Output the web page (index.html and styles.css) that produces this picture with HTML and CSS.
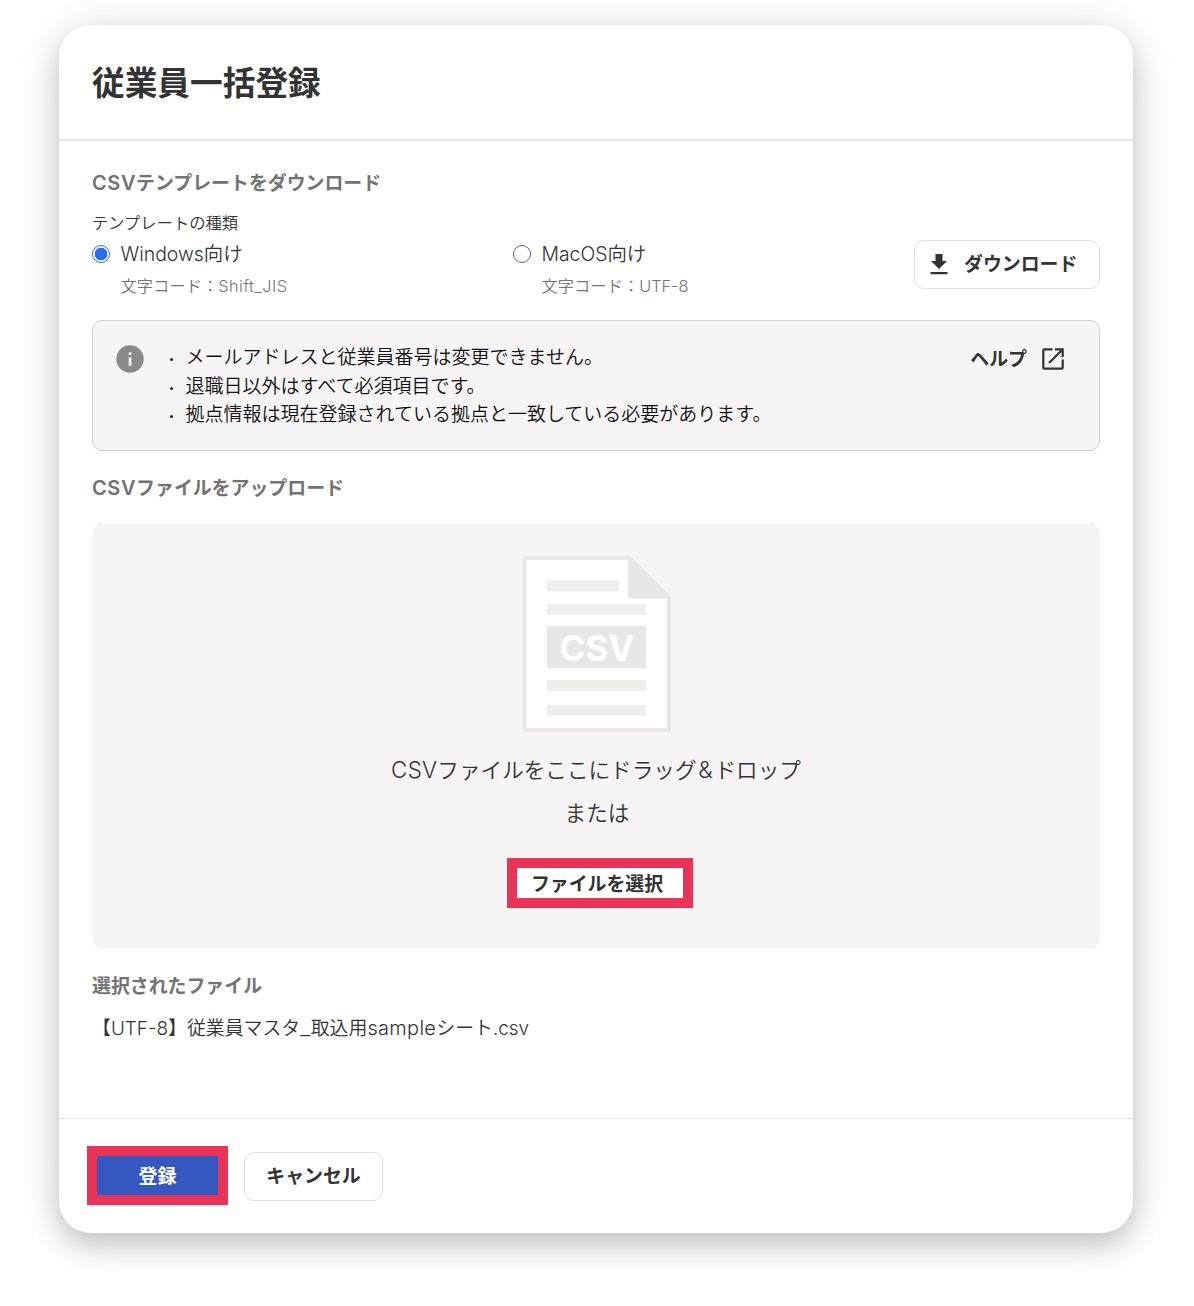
FILE: index.html
```html
<!DOCTYPE html>
<html lang="ja">
<head>
<meta charset="utf-8">
<title>従業員一括登録</title>
<link rel="stylesheet" href="styles.css">
</head>
<body>
<main class="dialog">
  <header class="dialog-header"><h1>従業員一括登録</h1></header>
  <div class="dialog-body">
    <h2><span class="latin-bold">CSV</span>テンプレートをダウンロード</h2>
    <p class="field-label">テンプレートの種類</p>
    <div class="template-row">
      <label class="option option-windows">
        <span class="radio radio-checked"></span>
        <span class="option-text"><span class="option-name">Windows向け</span><span class="option-note">文字コード：<span class="latin-note">Shift_JIS</span></span></span>
      </label>
      <label class="option">
        <span class="radio"></span>
        <span class="option-text"><span class="option-name">MacOS向け</span><span class="option-note">文字コード：UTF-8</span></span>
      </label>
      <button class="button download" type="button">
        <svg width="18" height="22" viewBox="0 0 18 22"><path d="M5.5 1h7v7H17l-8 8-8-8h4.500zM.5 19h17v2.300H.5z" fill="#333"/></svg>
        <span>ダウンロード</span>
      </button>
    </div>
    <section class="info">
      <svg class="info-icon" width="28" height="28" viewBox="0 0 28 28"><circle cx="14" cy="14" r="13.700" fill="#8c8989"/><path d="M12.700 7.200h2.700v2.700h-2.700zM12.700 12.300h2.700v8.500h-2.700z" fill="#f6f4f5"/></svg>
      <ul>
        <li>メールアドレスと従業員番号は変更できません。</li>
        <li>退職日以外はすべて必須項目です。</li>
        <li>拠点情報は現在登録されている拠点と一致している必要があります。</li>
      </ul>
      <a class="help"><span>ヘルプ</span><svg width="24" height="24" viewBox="0 0 24 24" fill="none" stroke="#333" stroke-width="2.200"><path d="M11.500 2.300H3.300q-1 0-1 1v17.400q0 1 1 1h17.400q1 0 1-1v-8.200M14 2.300h7.700V10M21.300 2.700 8 16"/></svg></a>
    </section>
    <h2 class="upload-title"><span class="latin-bold">CSV</span>ファイルをアップロード</h2>
    <section class="dropzone">
      <svg class="csv-file" width="150" height="178" viewBox="0 0 150 178">
        <path d="M3.500 3h105L148 42v133H3.500z" fill="#fff" stroke="#e8e6e7" stroke-width="4"/>
        <path d="M107 1h2l40 40v2.500h-42z" fill="#e8e6e7"/>
        <path d="M26 25.500h72v11H26zM26 49h99v11H26zM26 125h99v11H26zM26 149.700h99v11H26z" fill="#eeeeec"/>
        <path d="M26 71h99v42.500H26z" fill="#e8e6e7"/>
        <text x="38.500" y="105.500" textLength="75">CSV</text>
      </svg>
      <p class="drop-text"><span class="latin-drop">CSV</span>ファイルをここにドラッグ<span class="ampersand">&amp;</span>ドロップ</p>
      <p class="drop-or">または</p>
      <button class="select-file" type="button">ファイルを選択</button>
    </section>
    <h2 class="selected-title">選択されたファイル</h2>
    <p class="file-name">【UTF-8】従業員マスタ<span class="underscore">_</span>取込用<span class="latin-file">sample</span>シート.csv</p>
  </div>
  <footer class="dialog-footer">
    <button class="submit" type="button">登録</button>
    <button class="button cancel" type="button"><span>キャンセル</span></button>
  </footer>
</main>
</body>
</html>
```
FILE: styles.css
```css
* { box-sizing: border-box; }
body {
  margin: 0;
  padding: 25px 61px 73px 59px;
  background: #fff;
  color: #333;
  font-family: Inter, "Noto Sans CJK JP", sans-serif;
  font-size: 18.900px;
  font-weight: 350;
}
h1, h2, p, ul { margin: 0; padding: 0; }
button { font-family: inherit; font-size: inherit; color: inherit; padding: 0; white-space: nowrap; }
svg { display: block; flex: none; }
.dialog {
  display: flex;
  flex-direction: column;
  height: 1208px;
  border-radius: 32px;
  background: #fff;
  box-shadow: 0 12px 28px rgba(0, 0, 0, .2), 0 4px 54px rgba(0, 0, 0, .09);
}
.dialog-header { height: 116px; padding: 34px 33px 0; border-bottom: 2px solid #e9e9e9; }
h1 { font-size: 32.700px; line-height: 48px; font-weight: 700; }
.dialog-body { flex: 1; padding: 29px 33px 0; }
h2 { font-size: 18.900px; line-height: 28px; font-weight: 600; color: #737373; }
.latin-bold { font-size: 20px; line-height: 20px; letter-spacing: .6px; }
.latin-note { letter-spacing: .5px; }
.latin-drop { font-size: 22.300px; line-height: 22px; letter-spacing: .3px; }
.latin-file { font-size: 20px; line-height: 20px; letter-spacing: .3px; }
.underscore { display: inline-block; transform: scaleX(1.2); padding: 0 1px; }
.ampersand { display: inline-block; width: 18px; text-align: center; font-size: 23px; line-height: 20px; }
.field-label { margin-top: 13px; font-size: 16.300px; line-height: 24px; }
.template-row { display: flex; height: 68px; margin-top: 5px; }
.option { display: flex; gap: 10.500px; width: 401px; }
.option-windows { width: 421px; }
.radio { flex: none; width: 18px; height: 18px; margin-top: 5px; border: 1.500px solid #666; border-radius: 50%; }
.radio-checked { border-color: #2b6cf6; background: radial-gradient(circle, #2b6cf6 0 6px, #fff 6.600px); }
.option-text { display: flex; flex-direction: column; gap: 6px; }
.option-name { font-size: 19.400px; line-height: 28px; }
.option-note { font-size: 16.300px; line-height: 24px; color: #757575; }
.button { display: flex; align-items: center; border: 1.500px solid #dedede; border-radius: 10px; background: #fff; font-weight: 700; }
.button span, .help span { position: relative; top: -2px; }
.download { width: 186px; height: 49px; padding: 0 0 1px 15px; gap: 16px; }
.info { display: flex; height: 131px; margin-top: 12px; padding: 23px 34px 0 23px; border: 1px solid #d1cfd0; border-radius: 10px; background: #f6f4f5; }
.info-icon { margin-top: 1px; }
ul { flex: 1; margin-left: 25px; list-style: none; color: #111; }
li { display: flex; align-items: center; gap: 12.500px; font-size: 19px; line-height: 28.500px; }
li::before { content: ""; width: 3px; height: 3px; margin-top: 3px; margin-left: 1px; border-radius: 50%; background: #222; }
.help { display: flex; align-items: center; gap: 14px; height: 30px; font-weight: 700; }
.upload-title { margin-top: 24px; }
.dropzone { display: flex; flex-direction: column; align-items: center; height: 426px; margin-top: 20px; padding-top: 32px; border-radius: 10px; background: #f6f4f5; }
.csv-file text { fill: #fff; font: 700 35px Inter, sans-serif; }
.drop-text, .drop-or { font-size: 21.600px; line-height: 32px; }
.drop-text { margin-top: 21px; }
.drop-or { margin: 11px 0 0 2px; }
.select-file { width: 186px; height: 50px; margin: 29px 0 0 8px; padding: 0 6px 2px 0; border: 10px solid #e93358; background: #fff; font-weight: 700; }
.selected-title { margin-top: 24px; }
.file-name { margin-top: 14px; line-height: 28px; }
.dialog-footer { display: flex; align-items: flex-start; gap: 16px; height: 115px; padding: 27px 28px 0; border-top: 1px solid #e3e3e3; }
.submit { width: 141px; height: 59px; padding-bottom: 2px; border: 10px solid #e93358; background: #3558c0; color: #fff; font-weight: 700; }
.cancel { justify-content: center; width: 139px; height: 49px; margin-top: 6px; }
```
